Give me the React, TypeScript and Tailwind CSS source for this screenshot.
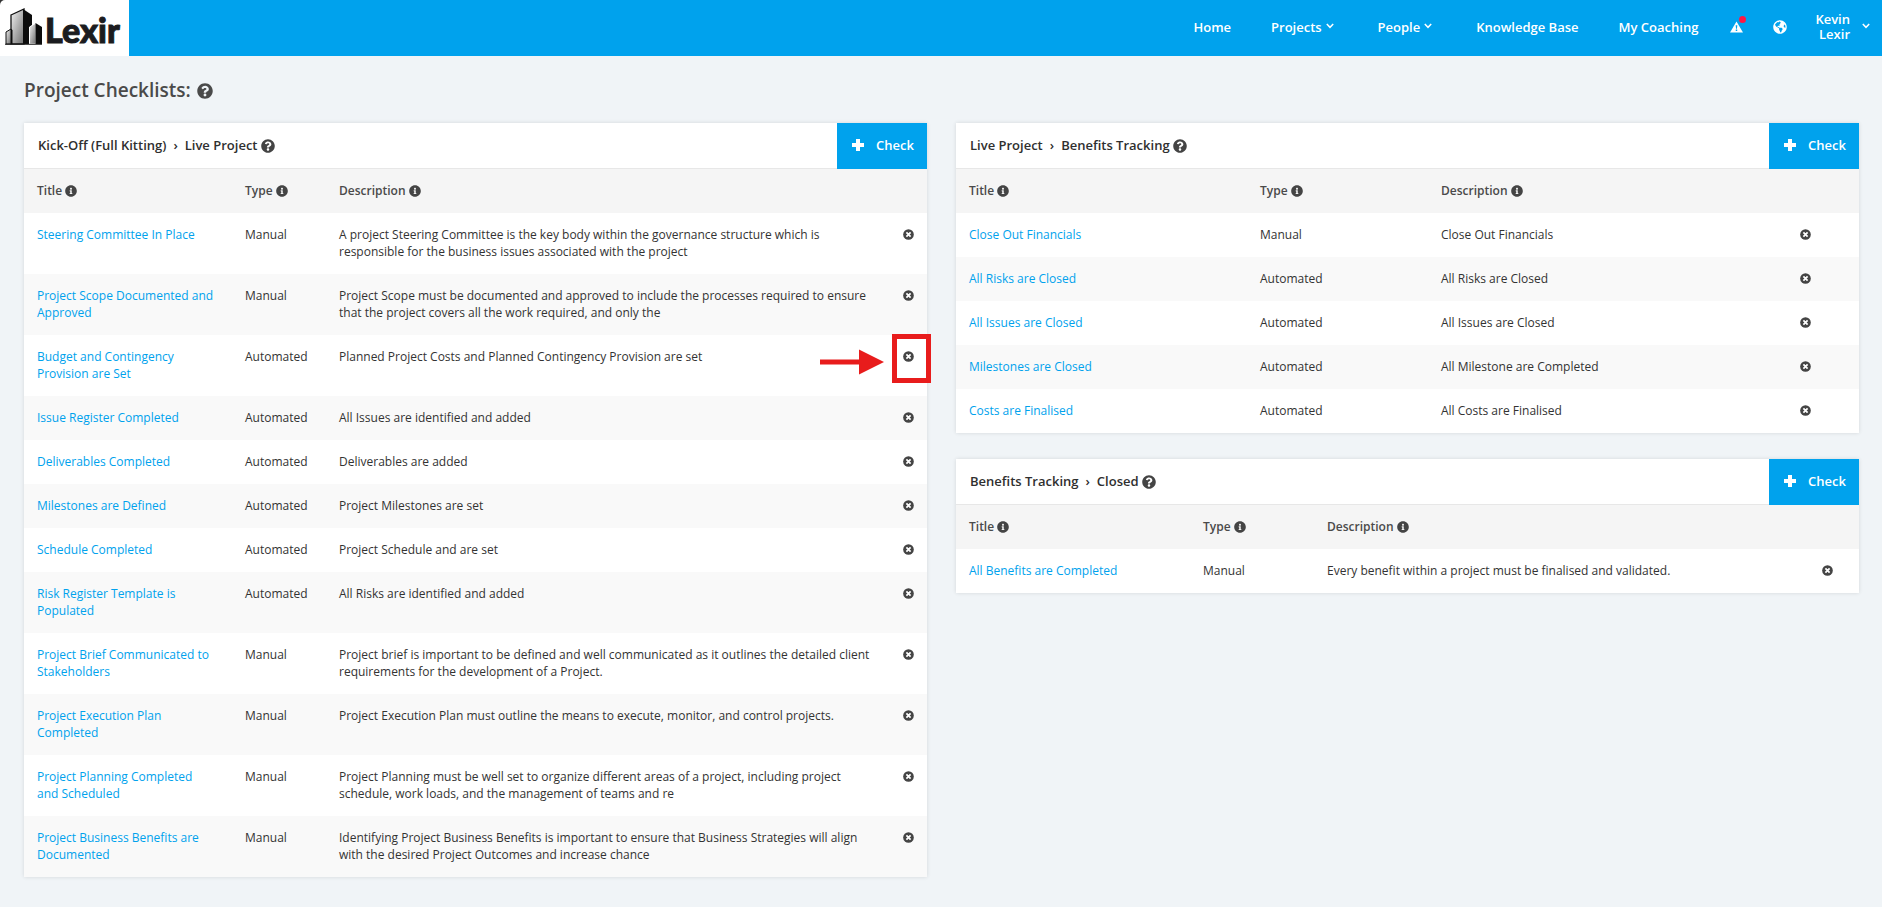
import React from 'react';
import { FaGlobeAmericas, FaInfoCircle, FaQuestionCircle } from 'react-icons/fa';
import clsx from 'clsx';

interface Check {
  title: string;
  type: 'Manual' | 'Automated';
  description: string;
  highlighted?: boolean;
}

interface Checklist {
  from: string;
  to: string;
  columns: [string, string, string];
  checks: Check[];
}

const kickOff: Checklist = {
  from: 'Kick-Off (Full Kitting)',
  to: 'Live Project',
  columns: ['w-[208px]', 'w-[94px]', 'w-[36px]'],
  checks: [
    {
      title: 'Steering Committee In Place',
      type: 'Manual',
      description:
        'A project Steering Committee is the key body within the governance structure which is responsible for the business issues associated with the project',
    },
    {
      title: 'Project Scope Documented and Approved',
      type: 'Manual',
      description:
        'Project Scope must be documented and approved to include the processes required to ensure that the project covers all the work required, and only the',
    },
    {
      title: 'Budget and Contingency Provision are Set',
      type: 'Automated',
      description: 'Planned Project Costs and Planned Contingency Provision are set',
      highlighted: true,
    },
    { title: 'Issue Register Completed', type: 'Automated', description: 'All Issues are identified and added' },
    { title: 'Deliverables Completed', type: 'Automated', description: 'Deliverables are added' },
    { title: 'Milestones are Defined', type: 'Automated', description: 'Project Milestones are set' },
    { title: 'Schedule Completed', type: 'Automated', description: 'Project Schedule and are set' },
    { title: 'Risk Register Template is Populated', type: 'Automated', description: 'All Risks are identified and added' },
    {
      title: 'Project Brief Communicated to Stakeholders',
      type: 'Manual',
      description:
        'Project brief is important to be defined and well communicated as it outlines the detailed client requirements for the development of a Project.',
    },
    {
      title: 'Project Execution Plan Completed',
      type: 'Manual',
      description: 'Project Execution Plan must outline the means to execute, monitor, and control projects.',
    },
    {
      title: 'Project Planning Completed and Scheduled',
      type: 'Manual',
      description:
        'Project Planning must be well set to organize different areas of a project, including project schedule, work loads, and the management of teams and re',
    },
    {
      title: 'Project Business Benefits are Documented',
      type: 'Manual',
      description:
        'Identifying Project Business Benefits is important to ensure that Business Strategies will align with the desired Project Outcomes and increase chance',
    },
  ],
};

const liveProject: Checklist = {
  from: 'Live Project',
  to: 'Benefits Tracking',
  columns: ['w-[291px]', 'w-[181px]', 'w-[71px]'],
  checks: [
    { title: 'Close Out Financials', type: 'Manual', description: 'Close Out Financials' },
    { title: 'All Risks are Closed', type: 'Automated', description: 'All Risks are Closed' },
    { title: 'All Issues are Closed', type: 'Automated', description: 'All Issues are Closed' },
    { title: 'Milestones are Closed', type: 'Automated', description: 'All Milestone are Completed' },
    { title: 'Costs are Finalised', type: 'Automated', description: 'All Costs are Finalised' },
  ],
};

const benefits: Checklist = {
  from: 'Benefits Tracking',
  to: 'Closed',
  columns: ['w-[234px]', 'w-[124px]', 'w-[49px]'],
  checks: [
    {
      title: 'All Benefits are Completed',
      type: 'Manual',
      description: 'Every benefit within a project must be finalised and validated.',
    },
  ],
};

/* Icons */

const Chevron = () => (
  <svg viewBox="0 0 8 6" className="mb-0.5 h-1.5 w-2" fill="none" stroke="currentColor" strokeWidth="1.5">
    <path d="M.8 1 4 4.3 7.2 1" />
  </svg>
);

const PlusIcon = () => (
  <svg viewBox="0 0 12 12" className="mr-3 mb-[3px] size-3" fill="currentColor">
    <path d="M4 0h4v4h4v4H8v4H4V8H0V4h4Z" />
  </svg>
);

const RemoveIcon = () => (
  <svg viewBox="0 0 12 12" className="size-[11px]">
    <circle cx="6" cy="6" r="5.8" fill="#444" />
    <path d="M3.700 3.700 8.300 8.300M8.300 3.700 3.700 8.300" stroke="#fff" strokeWidth="1.9" />
  </svg>
);

const WarningIcon = () => (
  <svg viewBox="0 0 14 12" className="h-3 w-[13px]">
    <path d="M7 0 14 12H0Z" fill="#fff" />
    <path d="M6.1 4h1.8L7.5 8h-1ZM6.2 8.8h1.6v1.5H6.2Z" fill="#00a2ed" />
  </svg>
);

const Buildings = () => (
  <svg viewBox="0 0 38 37" className="mb-[3px] h-[37px] w-[38px] shrink-0">
    <defs>
      <linearGradient id="face" x1="0" y1="0" x2="1" y2="1">
        <stop offset="0" stopColor="#f4f4f4" />
        <stop offset="1" stopColor="#6d6d6d" />
      </linearGradient>
    </defs>
    <path d="M6 7 19 1v35H6Z" fill="url(#face)" stroke="#111" strokeWidth="1.3" />
    <path d="M18 1 27 7v29h-9Z" fill="#0c0c0c" />
    <path d="M1 24 6 21v15H1Z" fill="url(#face)" stroke="#111" strokeWidth="1" />
    <path d="M6 21 7.500 22v14H6Z" fill="#0c0c0c" />
    <path d="M24.500 19 31 15v21h-6.500Z" fill="url(#face)" stroke="#fff" strokeWidth="1" />
    <path d="M30.500 15 37 19v17h-6.500Z" fill="#0c0c0c" />
    <path d="M0 36.300h37" stroke="#222" strokeWidth="1" />
  </svg>
);

/* Header */

const navLink = 'flex items-center gap-1 hover:underline';

function Header() {
  return (
    <header className="flex h-14 items-stretch justify-between bg-[#00a2ed] text-white">
      <a href="#" className="flex w-[129px] bg-[#333] text-[#1b1c20]">
        <span className="flex flex-1 items-center rounded-tl-[5px] bg-white pl-[5px]">
          <Buildings />
          <span className="pt-1 pl-0.5 font-['Lato'] text-[34px] leading-8 font-black [-webkit-text-stroke:1px_#1b1c20]">
            Lexir
          </span>
        </span>
      </a>
      <nav className="flex items-center pr-3 pb-0.5 text-[13px] leading-[15px] font-semibold">
        <a href="#" className={navLink}>Home</a>
        <a href="#" className={clsx(navLink, 'ml-10')}>Projects <Chevron /></a>
        <a href="#" className={clsx(navLink, 'ml-11')}>People <Chevron /></a>
        <a href="#" className={clsx(navLink, 'ml-11')}>Knowledge Base</a>
        <a href="#" className={clsx(navLink, 'ml-10')}>My Coaching</a>
        <button type="button" aria-label="Alerts" className="relative ml-8">
          <WarningIcon />
          <span className="absolute -top-[5px] left-[9px] size-[7px] rounded-full bg-[#ff1744]" />
        </button>
        <button type="button" aria-label="Language" className="ml-[30px]">
          <FaGlobeAmericas className="size-[14px]" />
        </button>
        <button type="button" className="ml-7 flex items-center gap-3 text-right">
          <span>Kevin<br />Lexir</span>
          <Chevron />
        </button>
      </nav>
    </header>
  );
}

/* Checklist panel */

function Highlight() {
  return (
    <>
      <span className="pointer-events-none absolute -top-px left-px h-[49px] w-[39px] border-5 border-[#e81c1c]" />
      <svg viewBox="0 0 64 26" className="pointer-events-none absolute top-[14px] -left-[71px] h-[26px] w-16">
        <path d="M0 10.500h39V.5L64 13 39 25.500v-10H0Z" fill="#e81c1c" />
      </svg>
    </>
  );
}

function ColumnHead({ children }: { children: React.ReactNode }) {
  return (
    <th scope="col" className="px-[13px] pt-[13px] pb-[14px] font-semibold text-[#4a4a4a]">
      <span className="flex items-center gap-[3px]">
        {children}
        <FaInfoCircle className="size-3 text-[#444]" />
      </span>
    </th>
  );
}

function ChecklistPanel({ from, to, columns, checks }: Checklist) {
  const [titleCol, typeCol, actionCol] = columns;

  return (
    <section className="bg-white shadow-[0_0_4px_rgba(0,0,0,0.12)]">
      <div className="flex h-[46px] items-stretch">
        <h2 className="flex flex-1 items-center border-b border-[#e7e7e7] pl-[14px] text-[13px] font-semibold text-[#2f2f2f]">
          {from}
          <span className="mx-[7px]">›</span>
          {to}
          <FaQuestionCircle className="ml-[3px] size-[14px] text-[#444]" />
        </h2>
        <button type="button" className="flex w-[90px] items-center bg-[#00a2ed] pl-[15px] text-[13px] font-semibold text-white">
          <PlusIcon />
          Check
        </button>
      </div>
      <table className="w-full table-fixed text-left text-[12px] leading-[17px] text-[#333]">
        <colgroup>
          <col className={titleCol} />
          <col className={typeCol} />
          <col />
          <col className={actionCol} />
        </colgroup>
        <thead className="bg-[#f5f5f5]">
          <tr>
            <ColumnHead>Title</ColumnHead>
            <ColumnHead>Type</ColumnHead>
            <ColumnHead>Description</ColumnHead>
            <td />
          </tr>
        </thead>
        <tbody>
          {checks.map((check) => (
            <tr key={check.title} className="align-top even:bg-[#f9f9f9]">
              <td className="pt-[13px] pr-[17px] pb-[14px] pl-[13px]">
                <a href="#" className="text-[#00a2ed] hover:underline">{check.title}</a>
              </td>
              <td className="px-[13px] pt-[13px] pb-[14px]">{check.type}</td>
              <td className="px-[13px] pt-[13px] pb-[14px]">{check.description}</td>
              <td className="relative pt-[13px] pl-3">
                <button type="button" aria-label={`Remove ${check.title}`} className="flex h-[17px] items-center">
                  <RemoveIcon />
                </button>
                {check.highlighted && <Highlight />}
              </td>
            </tr>
          ))}
        </tbody>
      </table>
    </section>
  );
}

export default function App() {
  return (
    <div className="min-h-screen bg-[#f0f4f7] font-['Open_Sans',sans-serif]">
      <Header />
      <main className="pr-[23px] pb-7 pl-6">
        <h1 className="flex h-[67px] items-center gap-1.5 pt-0.5 text-[19px] font-semibold text-[#4a4a4a]">
          Project Checklists:
          <FaQuestionCircle className="size-4" />
        </h1>
        <div className="grid grid-cols-2 items-start gap-[29px]">
          <ChecklistPanel {...kickOff} />
          <div className="flex flex-col gap-[26px]">
            <ChecklistPanel {...liveProject} />
            <ChecklistPanel {...benefits} />
          </div>
        </div>
      </main>
    </div>
  );
}
